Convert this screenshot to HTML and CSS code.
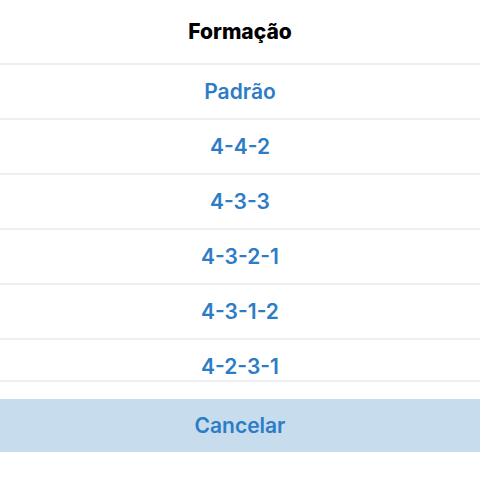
FILE: index.html
```html
<!DOCTYPE html>
<html lang="pt">
<head>
<meta charset="utf-8">
<link rel="stylesheet" href="styles.css">
</head>
<body>
<div class="sheet">
  <div class="title">Formação</div>
  <div class="list">
    <div class="item">Padrão</div>
    <div class="item">4-4-2</div>
    <div class="item">4-3-3</div>
    <div class="item">4-3-2-1</div>
    <div class="item">4-3-1-2</div>
    <div class="item">4-2-3-1</div>
  </div>
  <div class="cancel">Cancelar</div>
</div>
</body>
</html>
```
FILE: styles.css
```css
html, body { margin: 0; padding: 0; background: #fff; }
body { font-family: Inter, "Noto Sans", sans-serif; width: 480px; height: 480px; overflow: hidden; }
.sheet { display: flex; flex-direction: column; }
.title { height: 63px; display: flex; align-items: center; justify-content: center; font-size: 21px; font-weight: 800; color: #000; border-bottom: 2px solid #efefef; }
.list { height: 315px; overflow: hidden; border-bottom: 2px solid #efefef; }
.item { height: 53px; display: flex; align-items: center; justify-content: center; font-size: 21px; font-weight: 600; color: #2d7cc6; border-bottom: 2px solid #efefef; }
.cancel { margin-top: 17px; height: 53px; background: #c7dcec; display: flex; align-items: center; justify-content: center; font-size: 21px; font-weight: 600; color: #2d7cc6; }
```
